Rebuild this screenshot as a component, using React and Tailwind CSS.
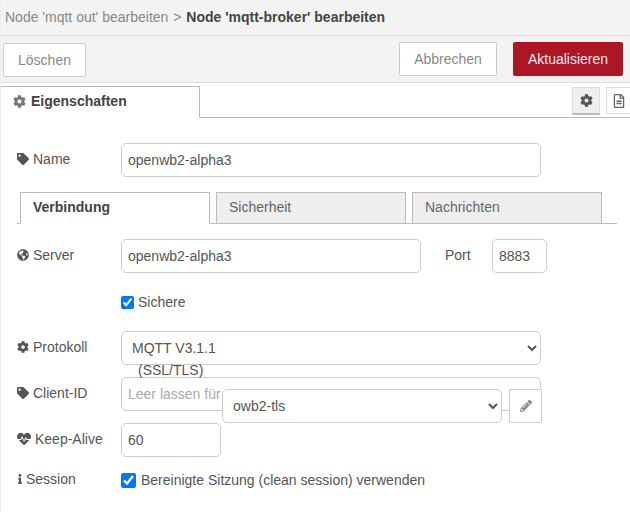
import React from "react";
import { FaCog, FaTag, FaGlobeAmericas, FaHeartbeat, FaInfo, FaPencilAlt, FaRegFileAlt } from "react-icons/fa";

const inputCls = "h-[34px] border border-[#ccc] rounded-[5px] px-[6px] text-[14px] text-[#555] bg-white outline-none font-['Liberation_Sans',sans-serif]";
const selectCls = "h-[34px] border border-[#ccc] rounded-[5px] text-[14px] text-[#555] bg-white outline-none font-['Liberation_Sans',sans-serif]";

function Row({ icon, label, gap = "gap-[4px]", className = "", children }) {
  return (
    <div className={"flex items-center pl-[17px] " + className}>
      <div className={"w-[104px] flex items-center text-[14px] text-[#555] -mt-[2px] " + gap}>
        {icon}
        <span>{label}</span>
      </div>
      {children}
    </div>
  );
}

function InnerTab({ active, children }) {
  return active ? (
    <div className="w-[190px] h-[32px] -mb-px border border-[#bbb] border-b-white bg-white pl-[12px] pt-[4px] font-bold text-[#444]">{children}</div>
  ) : (
    <div className="w-[190px] h-[32px] border border-[#bbb] bg-[#eee] pl-[12px] pt-[4px] text-[#666]">{children}</div>
  );
}

export default function App() {
  return (
    <div className="relative w-[630px] h-[512px] overflow-hidden bg-white text-[14px] text-[#555] font-['Liberation_Sans',sans-serif] border-l border-[#eee]">
      <div className="h-[36px] -ml-px pl-[5px] pt-[8px] bg-[#f3f3f3] border-b border-[#ddd] leading-[18px]">
        <span className="text-[#888]">Node 'mqtt out' bearbeiten</span>
        <span className="text-[#888] mx-[1px]"> &gt; </span>
        <span className="font-bold text-[#444]">Node 'mqtt-broker' bearbeiten</span>
      </div>

      <div className="h-[47px] -ml-px bg-[#f3f3f3] border-b border-[#ddd] flex items-start pt-[6px] pl-[3px] pr-[7px]">
        <button className="mt-[1px] w-[83px] h-[34px] bg-white border border-[#ccc] rounded-[2px] text-[#888]">Löschen</button>
        <button className="ml-auto w-[98px] h-[34px] bg-white border border-[#ccc] rounded-[2px] text-[#888]">Abbrechen</button>
        <button className="ml-[16px] w-[110px] h-[34px] bg-[#ad1625] rounded-[2px] text-[#eee]">Aktualisieren</button>
      </div>

      <div className="h-[35px] -ml-px border-b border-[#bbb] flex items-start pt-[3px]">
        <div className="w-[200px] h-[32px] border border-[#bbb] border-b-white bg-white flex items-center gap-[5px] pl-[12px] pb-[2px] font-bold text-[#444]">
          <FaCog className="text-[#777] text-[13px]" />
          <span>Eigenschaften</span>
        </div>
        <div className="ml-auto flex gap-[6px] -mr-[2px] pt-px">
          <div className="w-[28px] h-[28px] bg-[#efefef] border border-[#ddd] border-b-[2px] border-b-[#bbb] flex items-center justify-center">
            <FaCog className="text-[#555] text-[13px]" />
          </div>
          <div className="w-[26px] h-[27px] bg-white border border-[#ddd] flex items-center justify-center">
            <FaRegFileAlt className="text-[#666] text-[14px]" />
          </div>
        </div>
      </div>

      <Row icon={<FaTag className="text-[#555] text-[12px]" />} label="Name" className="mt-[25px] -ml-px">
        <input readOnly value="openwb2-alpha3" className={inputCls + " w-[420px]"} />
      </Row>

      <div className="mt-[15px] ml-[16px] w-[600px] h-[32px] border-b border-[#bbb] flex gap-[6px] pl-[3px]">
        <InnerTab active>Verbindung</InnerTab>
        <InnerTab>Sicherheit</InnerTab>
        <InnerTab>Nachrichten</InnerTab>
      </div>

      <Row icon={<FaGlobeAmericas className="text-[#555] text-[12px]" />} label="Server" className="mt-[15px] -ml-px">
        <input readOnly value="openwb2-alpha3" className={inputCls + " w-[300px]"} />
        <span className="ml-[24px] w-[47px] -mt-[2px]">Port</span>
        <input readOnly value="8883" className={inputCls + " w-[55px]"} />
      </Row>

      <label className="mt-[22px] ml-[120px] h-[15px] flex items-center gap-[4px]">
        <input type="checkbox" readOnly checked className="w-[13px] h-[13px] m-0" />
        <span>Sichere</span>
      </label>

      <Row icon={<FaCog className="text-[#555] text-[12px]" />} label="Protokoll" className="mt-[21px] -ml-px">
        <select className={selectCls + " pl-[6px] w-[420px]"} defaultValue="a">
          <option value="a">MQTT V3.1.1</option>
        </select>
      </Row>

      <Row icon={<FaTag className="text-[#555] text-[12px]" />} label="Client-ID" className="mt-[12px] -ml-px">
        <input readOnly placeholder="Leer lassen für" className={inputCls + " w-[420px] placeholder:text-[#aaa]"} />
      </Row>

      <Row icon={<FaHeartbeat className="text-[#555] text-[14px]" />} label="Keep-Alive" gap="gap-[4px]" className="mt-[12px] -ml-px">
        <input readOnly value="60" className={inputCls + " w-[100px]"} />
      </Row>

      <Row icon={<FaInfo className="text-[#555] text-[10px] -ml-[2px]" />} label="Session" gap="gap-[1px]" className="mt-[12px] -ml-px">
        <label className="flex items-center gap-[5px] mt-[1px]">
          <input type="checkbox" readOnly checked className="w-[15px] h-[15px] m-0" />
          <span>Bereinigte Sitzung (clean session) verwenden</span>
        </label>
      </Row>

      {/* content spilling over the rows, as in the reference */}
      <span className="absolute left-[137px] top-[362px] leading-[16px]">(SSL/TLS)</span>
      <div className="absolute left-[221px] top-[389px] flex items-center">
        <select className={selectCls + " pl-[6px] w-[280px]"} defaultValue="o">
          <option value="o">owb2-tls</option>
        </select>
        <div className="w-[7px] h-px bg-[#ccc] mt-[8px]" />
        <button className="w-[33px] h-[34px] bg-white border border-[#ccc] rounded-[2px] flex items-center justify-center">
          <FaPencilAlt className="text-[#888] text-[12px]" />
        </button>
      </div>
    </div>
  );
}
